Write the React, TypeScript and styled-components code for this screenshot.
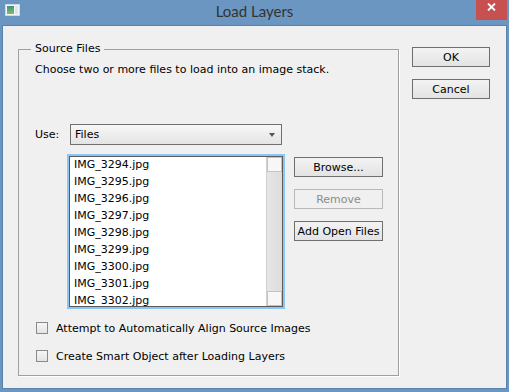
import styled, { createGlobalStyle } from 'styled-components';

const GlobalStyle = createGlobalStyle`
  html, body {
    margin: 0;
    padding: 0;
    background: #6a96c1;
  }
  * {
    box-sizing: border-box;
  }
`;

const files = [
  'IMG_3294.jpg',
  'IMG_3295.jpg',
  'IMG_3296.jpg',
  'IMG_3297.jpg',
  'IMG_3298.jpg',
  'IMG_3299.jpg',
  'IMG_3300.jpg',
  'IMG_3301.jpg',
  'IMG_3302.jpg',
];

function AppIcon() {
  return (
    <svg width="15" height="12" viewBox="0 0 15 12">
      <rect x="0.5" y="0.5" width="14" height="11" fill="#f4f6f8" stroke="#cfd8e0" />
      <defs>
        <linearGradient id="ps" x1="0" y1="0" x2="0" y2="1">
          <stop offset="0" stopColor="#3f8f86" />
          <stop offset="1" stopColor="#7fc25a" />
        </linearGradient>
      </defs>
      <rect x="2" y="2" width="7" height="8" fill="url(#ps)" />
      <rect x="10" y="2" width="3" height="8" fill="#dfe4ea" />
    </svg>
  );
}

function App() {
  return (
    <>
      <GlobalStyle />
      <Window>
        <TitleBar>
          <IconSlot>
            <AppIcon />
          </IconSlot>
          <Title>Load Layers</Title>
          <CloseButton>
            <svg width="9" height="8" viewBox="0 0 9 8">
              <path d="M1 0.5 L8 7.5 M8 0.5 L1 7.5" stroke="#fff" strokeWidth="1.8" />
            </svg>
          </CloseButton>
        </TitleBar>
        <Panel>
          <Group>
            <Legend>Source Files</Legend>
            <Description>Choose two or more files to load into an image stack.</Description>
            <UseRow>
              <UseLabel>Use:</UseLabel>
              <Select>
                <span>Files</span>
                <Arrow />
              </Select>
            </UseRow>
            <ListRow>
              <FocusRing>
                <ListBox>
                  <Items>
                    {files.map((f) => (
                      <Item key={f}>{f}</Item>
                    ))}
                  </Items>
                  <ScrollBar>
                    <ScrollCap />
                    <ScrollCap />
                  </ScrollBar>
                </ListBox>
              </FocusRing>
              <SideButtons>
                <Button $width={89}>Browse...</Button>
                <Button $width={89} $disabled>
                  Remove
                </Button>
                <Button $width={89}>Add Open Files</Button>
              </SideButtons>
            </ListRow>
            <CheckRow $top={11}>
              <CheckBox />
              <span>Attempt to Automatically Align Source Images</span>
            </CheckRow>
            <CheckRow $top={12}>
              <CheckBox />
              <span>Create Smart Object after Loading Layers</span>
            </CheckRow>
          </Group>
          <DialogButtons>
            <Button $width={78}>OK</Button>
            <Button $width={78}>Cancel</Button>
          </DialogButtons>
        </Panel>
      </Window>
    </>
  );
}

const Window = styled.div`
  width: 509px;
  height: 392px;
  background: #6a96c1;
  display: flex;
  flex-direction: column;
  padding: 0 2px 3px 2px;
  font-family: "DejaVu Sans", sans-serif;
  font-size: 11px;
  color: #000;
`;

const TitleBar = styled.div`
  height: 25px;
  display: grid;
  grid-template-columns: 1fr auto 1fr;
  align-items: start;
`;

const IconSlot = styled.div`
  padding: 4px 0 0 3px;
  display: flex;
`;

const Title = styled.div`
  font-family: Lato, "Open Sans", sans-serif;
  font-size: 15px;
  line-height: 20px;
  padding-top: 1px;
  color: #333;
`;

const CloseButton = styled.div`
  justify-self: end;
  width: 31px;
  height: 20px;
  background: #c75050;
  display: flex;
  justify-content: center;
  padding-top: 3px;
`;

const Panel = styled.div`
  flex: 1;
  background: #f0f0f0;
  border: 1px solid #5a83ac;
  display: flex;
  align-items: flex-start;
  gap: 13px;
  padding: 17px 16px 0 15px;
`;

const Group = styled.fieldset`
  margin: 0;
  width: 381px;
  height: 333px;
  padding: 0 0 0 16px;
  border: 1px solid #a0a0a0;
  border-radius: 0;
  box-shadow: 1px 1px 0 #fff;
  display: flex;
  flex-direction: column;
  min-width: 0;
`;

const Legend = styled.legend`
  padding: 0 4px;
  margin-left: -4px;
  line-height: 12px;
`;

const Description = styled.div`
  line-height: 12px;
  margin-top: 9px;
  white-space: nowrap;
`;

const UseRow = styled.div`
  display: flex;
  align-items: center;
  margin-top: 48px;
`;

const UseLabel = styled.span`
  width: 35px;
`;

const Select = styled.div`
  width: 212px;
  height: 21px;
  border: 1px solid #707070;
  background: linear-gradient(#f7f7f7, #e4e4e4);
  display: flex;
  align-items: center;
  justify-content: space-between;
  padding: 0 6px 0 4px;
`;

const Arrow = styled.span`
  width: 0;
  height: 0;
  border-left: 3px solid transparent;
  border-right: 3px solid transparent;
  border-top: 4px solid #555;
`;

const ListRow = styled.div`
  display: flex;
  align-items: flex-start;
  gap: 9px;
  margin-top: 9px;
  margin-left: 32px;
`;

const FocusRing = styled.div`
  width: 218px;
  height: 155px;
  border: 2px solid #8cc6f2;
`;

const ListBox = styled.div`
  height: 100%;
  border: 1px solid #5a5a5a;
  background: #fff;
  display: flex;
  overflow: hidden;
`;

const Items = styled.div`
  flex: 1;
  padding: 0 0 0 4px;
  margin-top: -1px;
`;

const Item = styled.div`
  line-height: 17px;
  height: 17px;
  white-space: nowrap;
`;

const ScrollBar = styled.div`
  width: 16px;
  background: linear-gradient(90deg, #e6e6e6, #dcdcdc);
  border-left: 1px solid #d0d0d0;
  display: flex;
  flex-direction: column;
  justify-content: space-between;
`;

const ScrollCap = styled.div`
  height: 15px;
  background: #f7f7f7;
  border: 1px solid #c4c4c4;
`;

const SideButtons = styled.div`
  display: flex;
  flex-direction: column;
  gap: 12px;
  padding-top: 3px;
`;

const DialogButtons = styled.div`
  display: flex;
  flex-direction: column;
  gap: 12px;
  margin-top: 4px;
`;

const Button = styled.div<{ $width: number; $disabled?: boolean }>`
  width: ${(p) => p.$width}px;
  height: 20px;
  border: 1px solid ${(p) => (p.$disabled ? '#b9b9b9' : '#6f6f6f')};
  background: ${(p) => (p.$disabled ? '#f0f0f0' : 'linear-gradient(#f3f3f3, #e3e3e3)')};
  color: ${(p) => (p.$disabled ? '#8c8c8c' : '#000')};
  display: flex;
  align-items: center;
  justify-content: center;
  white-space: nowrap;
`;

const CheckRow = styled.div<{ $top: number }>`
  display: flex;
  align-items: center;
  gap: 8px;
  height: 16px;
  margin-top: ${(p) => p.$top}px;
  padding-left: 1px;
`;

const CheckBox = styled.span`
  width: 12px;
  height: 12px;
  border: 1px solid #8a8a8a;
  background: linear-gradient(#f6f6f6, #e4e4e4);
`;

export default App;
